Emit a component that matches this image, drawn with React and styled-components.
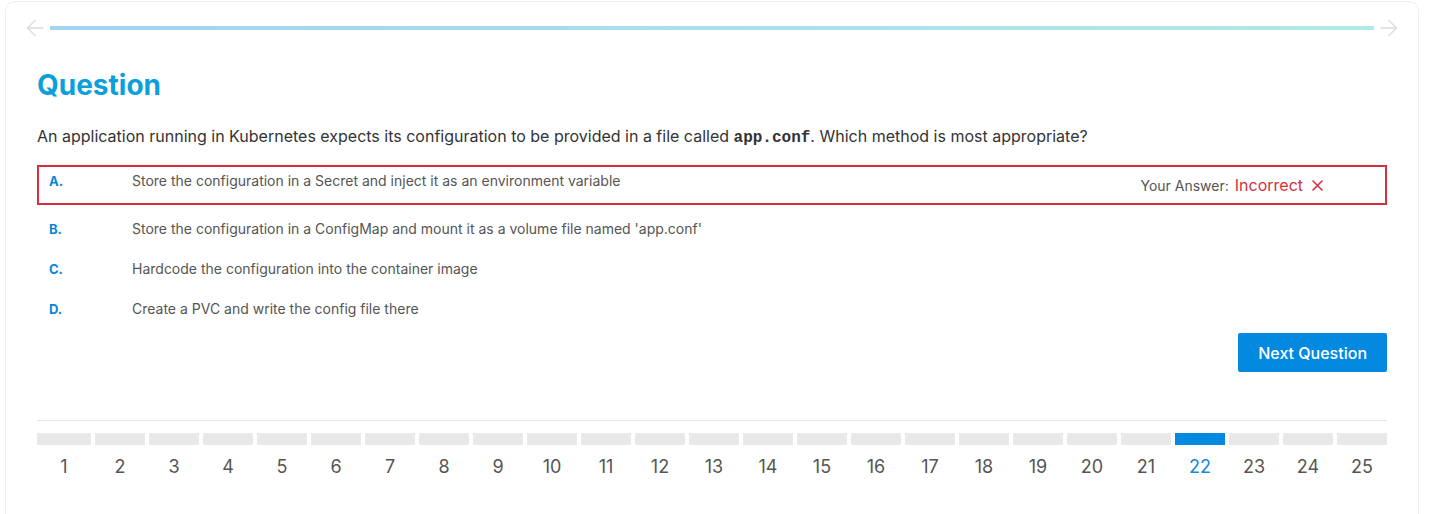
import React from "react";
import styled, { createGlobalStyle } from "styled-components";

const GlobalStyle = createGlobalStyle`
  html, body { margin: 0; padding: 0; background: #fff; }
  body { font-family: Inter, "Noto Sans", "Liberation Sans", sans-serif; color: #333; }
  * { box-sizing: border-box; }
`;

const Page = styled.div`
  padding: 1px 0 0 5px;
`;

const Card = styled.div`
  width: 1414px;
  min-height: 540px;
  border: 1px solid #efefef;
  border-radius: 10px;
  background: #fff;
`;

const TopBar = styled.div`
  display: flex;
  align-items: center;
  gap: 6px;
  padding: 17px 20px 0;
`;

const ArrowBtn = styled.span`
  display: flex;
  width: 18px;
  height: 18px;
  color: #dcdcdc;
`;

const Bar = styled.div`
  flex: 1;
  height: 4px;
  background: linear-gradient(90deg, #a4d3ef 0%, #a9dfec 50%, #b0e9e9 100%);
`;

const Content = styled.div`
  padding: 0 31px;
`;

const Heading = styled.h1`
  margin: 31px 0 0;
  font-size: 28px;
  line-height: 34px;
  font-weight: 700;
  color: #0b9fdb;
`;

const QuestionText = styled.p`
  margin: 22px 0 0;
  font-size: 16px;
  line-height: 24px;
  color: #333;
`;

const Code = styled.code`
  font-family: "Liberation Mono", "DejaVu Sans Mono", monospace;
  font-weight: 700;
  font-size: 16px;
`;

const Options = styled.div`
  margin-top: 15px;
  display: flex;
  flex-direction: column;
`;

const OptionRow = styled.div`
  display: flex;
  align-items: flex-start;
  height: 40px;
  padding: 4px 10px 0;
  border: 2px solid ${(p) => (p.$incorrect ? "#d32f3d" : "transparent")};
  margin-bottom: ${(p) => (p.$incorrect ? "8px" : "0")};
`;

const Letter = styled.span`
  width: 83px;
  flex: none;
  font-size: 13px;
  line-height: 20px;
  font-weight: 700;
  color: #0a85d9;
`;

const OptionText = styled.span`
  flex: 1;
  font-size: 14px;
  line-height: 20px;
  color: #555;
`;

const Verdict = styled.span`
  align-self: center;
  display: flex;
  align-items: center;
  margin-top: -4px;
  margin-right: 52px;
  font-size: 14px;
  color: #555;
`;

const VerdictLabel = styled.span`
  margin-left: 6px;
  font-size: 16px;
  color: #d32f3d;
`;

const CrossIcon = styled.svg`
  margin-left: 9px;
  width: 11px;
  height: 11px;
`;

const ButtonRow = styled.div`
  display: flex;
  justify-content: flex-end;
`;

const NextButton = styled.button`
  height: 39px;
  padding: 0 20px;
  border: none;
  border-radius: 2px;
  background: #0389e0;
  color: #fff;
  font-family: inherit;
  font-size: 16px;
  font-weight: 500;
  cursor: pointer;
`;

const Divider = styled.hr`
  margin: 48px 0 0;
  border: none;
  border-top: 1px solid #e6e6e6;
`;

const Steps = styled.div`
  margin-top: 12px;
  display: grid;
  grid-template-columns: repeat(25, 1fr);
`;

const Step = styled.div`
  padding-left: ${(p) => (p.$first ? "0" : "4px")};
  display: flex;
  flex-direction: column;
  align-items: center;
`;

const Segment = styled.div`
  width: 100%;
  height: 12px;
  background: ${(p) => (p.$active ? "#0389e0" : "#e8e8e8")};
`;

const StepNum = styled.span`
  margin-top: 10px;
  font-size: 18px;
  line-height: 24px;
  color: ${(p) => (p.$active ? "#1289d9" : "#555")};
`;

const ArrowLeft = () => (
  <svg viewBox="0 0 18 18" width="18" height="18" fill="none" stroke="currentColor" strokeWidth="1.4" strokeLinecap="round" strokeLinejoin="round">
    <path d="M17 9H1.5M9 1.5L1.5 9L9 16.5" />
  </svg>
);

const ArrowRight = () => (
  <svg viewBox="0 0 18 18" width="18" height="18" fill="none" stroke="currentColor" strokeWidth="1.4" strokeLinecap="round" strokeLinejoin="round">
    <path d="M1 9h15.5M9 1.5L16.5 9L9 16.5" />
  </svg>
);

const options = [
  { letter: "A.", text: "Store the configuration in a Secret and inject it as an environment variable", incorrect: true },
  { letter: "B.", text: "Store the configuration in a ConfigMap and mount it as a volume file named 'app.conf'" },
  { letter: "C.", text: "Hardcode the configuration into the container image" },
  { letter: "D.", text: "Create a PVC and write the config file there" },
];

export default function App() {
  const steps = Array.from({ length: 25 }, (_, i) => i + 1);
  return (
    <>
      <GlobalStyle />
      <Page>
        <Card>
          <TopBar>
            <ArrowBtn><ArrowLeft /></ArrowBtn>
            <Bar />
            <ArrowBtn><ArrowRight /></ArrowBtn>
          </TopBar>
          <Content>
            <Heading>Question</Heading>
            <QuestionText>
              An application running in Kubernetes expects its configuration to be provided in a file called <Code>app.conf</Code>. Which method is most appropriate?
            </QuestionText>
            <Options>
              {options.map((o) => (
                <OptionRow key={o.letter} $incorrect={o.incorrect}>
                  <Letter>{o.letter}</Letter>
                  <OptionText>{o.text}</OptionText>
                  {o.incorrect && (
                    <Verdict>
                      Your Answer:
                      <VerdictLabel>Incorrect</VerdictLabel>
                      <CrossIcon viewBox="0 0 11 11" fill="none" stroke="#d32f3d" strokeWidth="1.6" strokeLinecap="round">
                        <path d="M1 1l9 9M10 1l-9 9" />
                      </CrossIcon>
                    </Verdict>
                  )}
                </OptionRow>
              ))}
            </Options>
            <ButtonRow>
              <NextButton>Next Question</NextButton>
            </ButtonRow>
            <Divider />
            <Steps>
              {steps.map((n) => (
                <Step key={n} $first={n === 1}>
                  <Segment $active={n === 22} />
                  <StepNum $active={n === 22}>{n}</StepNum>
                </Step>
              ))}
            </Steps>
          </Content>
        </Card>
      </Page>
    </>
  );
}
